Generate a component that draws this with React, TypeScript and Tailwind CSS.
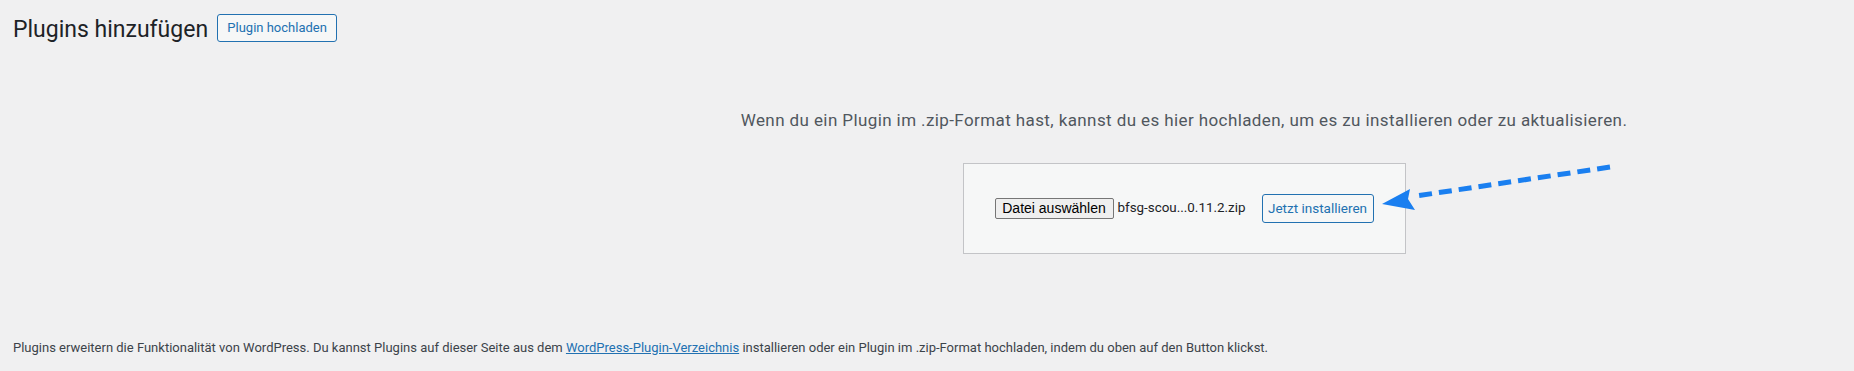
import React from "react";

export default function App() {
  const font = { fontFamily: "Roboto, 'Noto Sans', sans-serif" };
  return (
    <div
      className="relative w-[1854px] h-[371px] bg-[#f0f0f1] text-[#3c434a] overflow-hidden"
      style={font}
    >
      {/* header */}
      <div className="flex items-start gap-[9px] pl-[13px] pt-[14px]">
        <h1 className="mt-[2px] text-[23px] leading-[28px] font-normal text-[#1d2327]">Plugins hinzufügen</h1>
        <button className="h-[28px] w-[120px] rounded-[3px] border border-[#2271b1] bg-[#f6f7f7] text-[13px] text-[#2271b1]">
          Plugin hochladen
        </button>
      </div>

      {/* upload area */}
      <div className="pl-[514px] pt-[64px] flex flex-col items-center">
        <p className="text-[17px] leading-[24px] text-[#50575e] tracking-[0.4px] whitespace-nowrap">
          Wenn du ein Plugin im .zip-Format hast, kannst du es hier hochladen, um es zu installieren oder zu aktualisieren.
        </p>
        <div className="mt-[31px] w-[443px] h-[91px] border border-[#c3c4c7] bg-[#f6f7f7] flex items-center justify-center">
          <div className="flex items-center">
            <button
              className="h-[21px] w-[119px] rounded-[2px] border border-[#767676] bg-[#efefef] text-[14px] leading-[19px] text-black"
              style={{ fontFamily: "'Liberation Sans', Arial, sans-serif" }}
            >
              Datei auswählen
            </button>
            <span className="ml-[4px] w-[128px] text-[13.4px] text-[#1d2327] whitespace-nowrap">bfsg-scou...0.11.2.zip</span>
            <button className="ml-[16px] h-[29px] w-[112px] rounded-[3px] border border-[#2271b1] bg-[#f6f7f7] text-[13.5px] text-[#2271b1]">
              Jetzt installieren
            </button>
          </div>
        </div>
      </div>

      {/* footer */}
      <p className="absolute left-[13px] top-[339px] text-[13px] leading-[18px] text-[#3c434a] whitespace-nowrap">
        Plugins erweitern die Funktionalität von WordPress. Du kannst Plugins auf dieser Seite aus dem{" "}
        <a className="text-[#2271b1] underline" href="#">WordPress-Plugin-Verzeichnis</a> installieren oder ein Plugin im .zip-Format hochladen, indem du oben auf den Button klickst.
      </p>

      {/* annotation arrow */}
      <svg className="absolute left-0 top-0 pointer-events-none" width="1854" height="371" viewBox="0 0 1854 371">
        <line
          x1="1610"
          y1="167"
          x2="1416"
          y2="196"
          stroke="#1a7ff0"
          strokeWidth="5"
          strokeDasharray="13 7"
          strokeLinecap="butt"
        />
        <polygon points="1382,204 1410,189 1408,199 1415,210" fill="#1a7ff0" />
      </svg>
    </div>
  );
}
